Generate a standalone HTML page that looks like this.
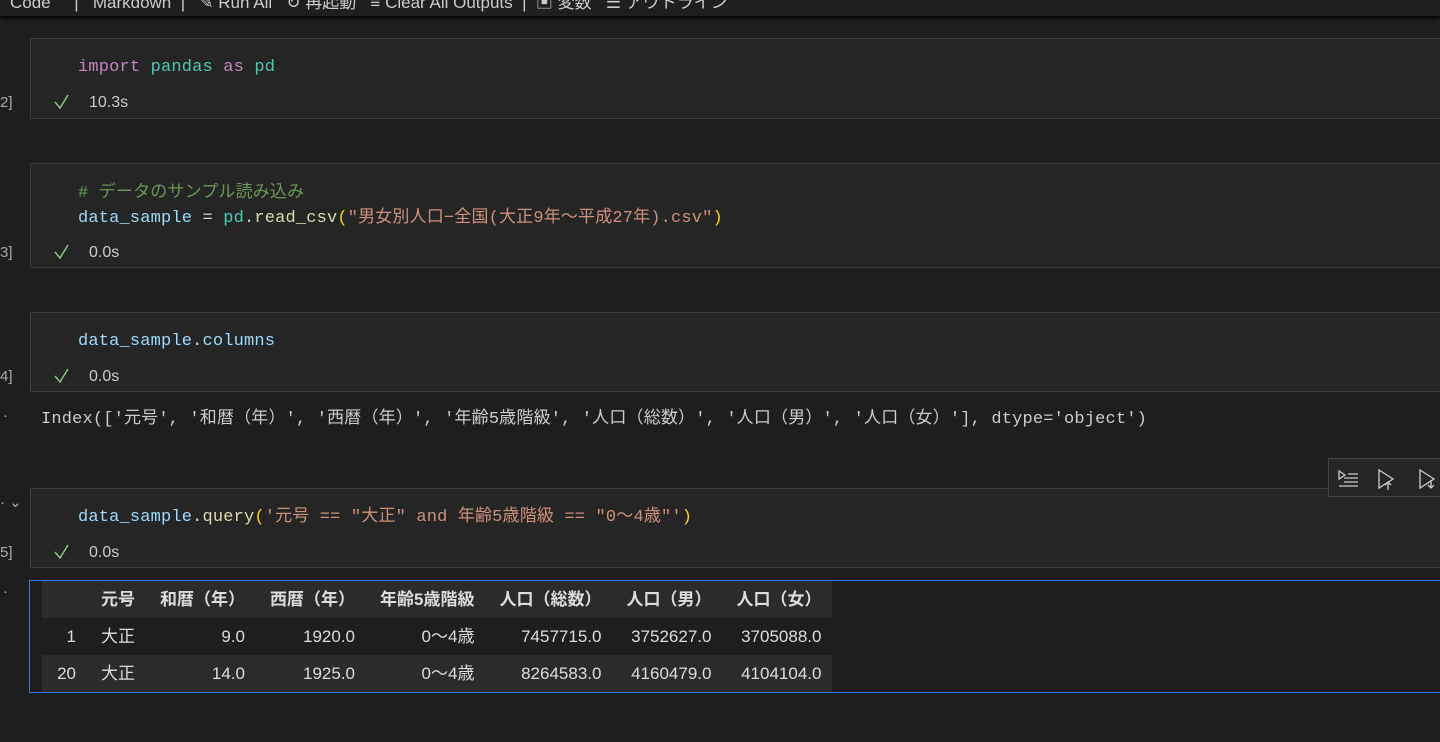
<!DOCTYPE html>
<html><head><meta charset="utf-8"><style>
body{margin:0;width:1440px;height:742px;background:#1e1e1e;overflow:hidden;position:relative;font-family:"Liberation Sans","Noto Sans CJK JP",sans-serif;color:#ccc}
.a{position:absolute;white-space:pre}
.top{position:absolute;left:0;top:0;width:1440px;height:16px;background:#1f1f1f;box-shadow:0 2px 5px #000;overflow:hidden;z-index:2}
.cell{position:absolute;left:30px;width:1420px;background:#252526;border:1px solid #3a3a3a;box-sizing:border-box}
.code{font-family:"Liberation Mono","Noto Sans CJK JP",monospace;font-size:17px;color:#9cdcfe;letter-spacing:0.17px;line-height:20px}
.st{font-size:16px;color:#ccc;line-height:20px}
.n{font-size:15px;color:#aaa;line-height:20px}
.k{color:#c586c0}.m{color:#4ec9b0}.s{color:#ce9178}.f{color:#dcdcaa}.c{color:#6a9955}.p{color:#d4d4d4}.y{color:#ffd700}
table{border-collapse:collapse;font-size:17px;color:#ddd;line-height:20px}
td,th{padding:0 11px 0 14px;height:37px;text-align:right;white-space:nowrap;vertical-align:middle}
th{font-weight:bold}
</style></head><body>
<div class="top"><span class="a" style="left:10px;top:-12px;font-size:17px;color:#ccc">Code &nbsp;&nbsp;&nbsp; | &nbsp; Markdown &nbsp;| &nbsp; ✎ Run All &nbsp; ↻ 再起動 &nbsp; ≡ Clear All Outputs &nbsp;| &nbsp;▣ 変数 &nbsp; ☰ アウトライン</span></div>

<svg width="0" height="0" style="position:absolute"><defs><path id="ck" d="M1 8l5 6L14 1" fill="none" stroke="#89d185" stroke-width="1.4"/></defs></svg>

<div class="cell" style="top:38px;height:81px"></div>
<div class="a code" style="left:78px;top:58px"><span class="k">import</span> <span class="m">pandas</span> <span class="k">as</span> <span class="m">pd</span></div>
<svg class="a" style="left:54px;top:94px" width="16" height="16"><use href="#ck"/></svg><div class="a st" style="left:89px;top:93px">10.3s</div>
<div class="a n" style="left:0;top:93px">2]</div>

<div class="cell" style="top:163px;height:105px"></div>
<div class="a code c" style="left:78px;top:184px"># データのサンプル読み込み</div>
<div class="a code" style="left:78px;top:209px">data_sample <span class="p">=</span> <span class="m">pd</span><span class="p">.</span><span class="f">read_csv</span><span class="y">(</span><span class="s">"男女別人口−全国(大正9年〜平成27年).csv"</span><span class="y">)</span></div>
<svg class="a" style="left:54px;top:244px" width="16" height="16"><use href="#ck"/></svg><div class="a st" style="left:89px;top:243px">0.0s</div>
<div class="a n" style="left:0;top:243px">3]</div>

<div class="cell" style="top:312px;height:80px"></div>
<div class="a code" style="left:78px;top:332px">data_sample<span class="p">.</span>columns</div>
<svg class="a" style="left:54px;top:368px" width="16" height="16"><use href="#ck"/></svg><div class="a st" style="left:89px;top:367px">0.0s</div>
<div class="a n" style="left:0;top:367px">4]</div>
<div class="a n" style="left:3px;top:406px">·</div>
<div class="a code" style="left:41px;top:410px;color:#ccc">Index(['元号', '和暦（年）', '西暦（年）', '年齢5歳階級', '人口（総数）', '人口（男）', '人口（女）'], dtype='object')</div>

<div class="cell" style="top:488px;height:80px"></div>
<div style="position:absolute;left:1328px;top:458px;width:120px;height:39px;border:1px solid #454545;background:#252526;box-sizing:border-box;z-index:3"></div>
<svg class="a" style="left:1336px;top:466px;z-index:4" width="110" height="24" viewBox="0 0 110 24" fill="none" stroke="#ccc" stroke-width="1.3">
<path d="M3 5l6 4-6 4z M8 12h14 M8 16h14 M3 20h19 M12 8h10"/>
<path d="M43 4l14 9-14 9z M52 24v-8 M49 19l3-3 3 3"/>
<path d="M84 4l14 9-14 9z M95 14v8 M92 19l3 3 3-3"/>
</svg>

<div class="a n" style="left:0;top:493px">· ⌄</div>
<div class="a code" style="left:78px;top:508px">data_sample<span class="p">.</span><span class="f">query</span><span class="y">(</span><span class="s">'元号 == "大正" and 年齢5歳階級 == "0〜4歳"'</span><span class="y">)</span></div>
<svg class="a" style="left:54px;top:544px" width="16" height="16"><use href="#ck"/></svg><div class="a st" style="left:89px;top:543px">0.0s</div>
<div class="a n" style="left:0;top:543px">5]</div>

<div class="a n" style="left:3px;top:582px">·</div>
<div style="position:absolute;left:29px;top:580px;width:1420px;height:113px;border:1px solid #2f7fd6;box-sizing:border-box"></div>
<table class="a" style="left:42px;top:581px">
<tr style="background:#2b2b2b"><th style="width:20px"></th><th>元号</th><th>和暦（年）</th><th>西暦（年）</th><th>年齢5歳階級</th><th>人口（総数）</th><th>人口（男）</th><th>人口（女）</th></tr>
<tr><td>1</td><td>大正</td><td>9.0</td><td>1920.0</td><td>0〜4歳</td><td>7457715.0</td><td>3752627.0</td><td>3705088.0</td></tr>
<tr style="background:#2b2b2b"><td>20</td><td>大正</td><td>14.0</td><td>1925.0</td><td>0〜4歳</td><td>8264583.0</td><td>4160479.0</td><td>4104104.0</td></tr>
</table>
</body></html>
